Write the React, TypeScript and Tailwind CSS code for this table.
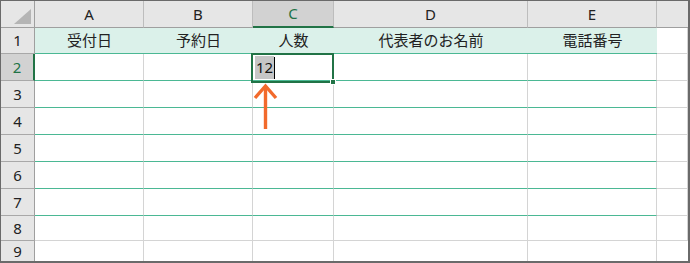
const COLS = [
  { key: "A", w: 109, title: "受付日" },
  { key: "B", w: 109, title: "予約日" },
  { key: "C", w: 81, title: "人数" },
  { key: "D", w: 194, title: "代表者のお名前" },
  { key: "E", w: 129, title: "電話番号" },
];

// heights of rows 2..8
const ROW_H = [27, 27, 27, 27, 27, 27, 25];

const font = "font-['Noto_Sans','Noto_Sans_CJK_JP',sans-serif]";

const Corner = () => (
  <div className="relative h-[27px] w-[34px] shrink-0 border-r border-b border-[#9f9f9f] bg-[#e6e6e6]">
    <svg className="absolute right-[3px] bottom-[3px]" width="17" height="15" viewBox="0 0 17 15">
      <polygon points="17,0 17,15 0,15" fill="#b5b5b5" />
    </svg>
  </div>
);

const RowHead = ({ n, active, h, last }: { n: number; active?: boolean; h: number; last?: boolean }) => (
  <div
    style={{ height: h }}
    className={`flex w-[34px] shrink-0 items-center justify-center text-[15px] ${last ? "" : "border-b border-[#a8a8a8]"} ${
      active
        ? "bg-[#d2d2d2] text-[#217346] border-r-2 border-r-[#217346]"
        : "bg-[#e6e6e6] text-[#222] border-r border-r-[#9f9f9f]"
    }`}
  >
    {n}
  </div>
);

export default function App() {
  return (
    <div className={`h-[263px] w-[690px] overflow-hidden bg-white border-t border-l border-r-2 border-b-2 border-[#6a6a6a] ${font}`}>
      {/* column headers */}
      <div className="flex">
        <Corner />
        {COLS.map((c) => (
          <div
            key={c.key}
            style={{ width: c.w }}
            className={`flex h-[27px] shrink-0 items-center justify-center border-r border-[#bdbdbd] text-[15px] ${
              c.key === "C"
                ? "bg-[#d2d2d2] text-[#217346] border-b-2 border-b-[#217346]"
                : "bg-[#e6e6e6] text-[#222] border-b border-b-[#9f9f9f]"
            }`}
          >
            {c.key}
          </div>
        ))}
        <div className="h-[27px] flex-1 border-b border-[#9f9f9f] bg-[#e6e6e6]" />
      </div>

      {/* row 1: table header band */}
      <div className="flex">
        <RowHead n={1} h={26} />
        {COLS.map((c) => (
          <div
            key={c.key}
            style={{ width: c.w }}
            className="flex h-[26px] shrink-0 items-center justify-center border-b border-[#4bb894] bg-[#dbf1ea] text-[15px] text-[#222]"
          >
            {c.title}
          </div>
        ))}
        <div className="h-[26px] flex-1 border-r border-b border-[#d4d4d4]" />
      </div>

      {/* data rows */}
      {ROW_H.map((h, i) => {
        const n = i + 2;
        const green = n <= 7;
        return (
          <div key={n} className="flex">
            <RowHead n={n} h={h} active={n === 2} />
            {COLS.map((c) => (
              <div
                key={c.key}
                style={{ width: c.w, height: h }}
                className={`relative shrink-0 border-r border-r-[#d4d4d4] border-b ${
                  green ? "border-b-[#4bb894]" : "border-b-[#d4d4d4]"
                }`}
              >
                {n === 2 && c.key === "C" && (
                  <div className="absolute -top-[1px] -left-[2px] z-10 h-[30px] w-[83px] border-2 border-[#217346]">
                    <div className="flex h-full items-start pt-[1px] pl-[2px]">
                      <span className="flex h-[23px] items-center bg-[#c6c6c6] px-[1px] text-[15px] text-[#111]">12</span>
                      <span className="mt-[1px] h-[22px] w-px bg-black" />
                    </div>
                    <div className="absolute -right-[4px] -bottom-[4px] h-[6px] w-[6px] border border-white bg-[#217346]" />
                  </div>
                )}
                {n === 3 && c.key === "C" && (
                  <svg className="absolute left-0 top-[2px] z-20" width="26" height="48" viewBox="0 0 26 48">
                    <path d="M12.5 3 V46" stroke="#f26a2c" strokeWidth="3.4" fill="none" />
                    <path d="M2 15 L12.5 3 L23 15" stroke="#f26a2c" strokeWidth="3.4" fill="none" strokeLinejoin="miter" />
                  </svg>
                )}
              </div>
            ))}
            <div style={{ height: h }} className="flex-1 border-r border-b border-[#d4d4d4]" />
          </div>
        );
      })}
      <div className="flex">
        <RowHead n={9} h={20} last />
        {COLS.map((c) => (
          <div key={c.key} style={{ width: c.w }} className="h-[20px] shrink-0 border-r border-[#d4d4d4]" />
        ))}
      </div>
    </div>
  );
}
